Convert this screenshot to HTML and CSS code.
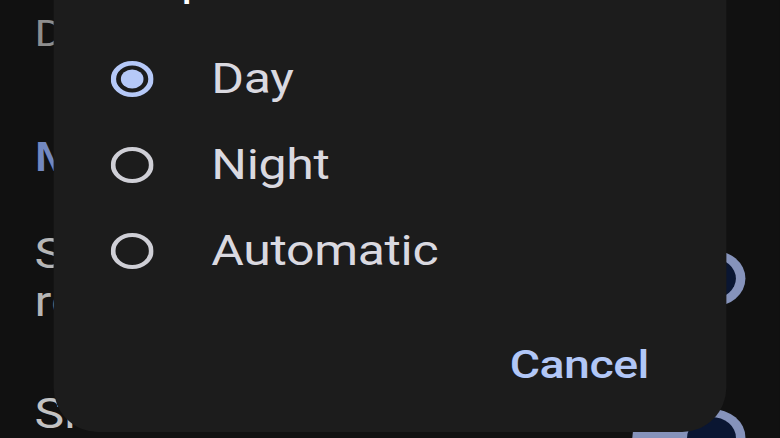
FILE: index.html
```html
<!DOCTYPE html>
<html lang="en">
<head>
<meta charset="utf-8">
<title>Map colour scheme</title>
<link rel="stylesheet" href="styles.css">
</head>
<body>
<div class="screen">
  <div class="settings">
    <div class="item-sub">Day</div>
    <div class="section-head">Map display</div>
    <div class="row row-c">
      <div class="row-text">
        <div class="row-title">Show speed limit<br>reminders</div>
      </div>
      <div class="switch"><span class="thumb"></span></div>
    </div>
    <div class="row row-d">
      <div class="row-text">
        <div class="row-title">Show traffic alerts</div>
        <div class="row-subtitle">On your route</div>
      </div>
      <div class="switch"><span class="thumb"></span></div>
    </div>
  </div>

  <div class="dialog" role="dialog">
    <div class="dialog-title">Map color scheme</div>
    <div class="options">
      <div class="option">
        <svg class="radio" viewBox="0 0 36 36" width="36" height="36">
          <circle cx="18" cy="18" r="15.75" fill="none" stroke="#b6c9f8" stroke-width="4.5"/>
          <circle cx="18" cy="18" r="9.5" fill="#b6c9f8"/>
        </svg>
        <span class="option-label">Day</span>
      </div>
      <div class="option">
        <svg class="radio" viewBox="0 0 36 36" width="36" height="36">
          <circle cx="18" cy="18" r="16" fill="none" stroke="#cfcfd6" stroke-width="4"/>
        </svg>
        <span class="option-label">Night</span>
      </div>
      <div class="option">
        <svg class="radio" viewBox="0 0 36 36" width="36" height="36">
          <circle cx="18" cy="18" r="16" fill="none" stroke="#cfcfd6" stroke-width="4"/>
        </svg>
        <span class="option-label">Automatic</span>
      </div>
    </div>
    <div class="actions">
      <span class="btn-text">Cancel</span>
    </div>
  </div>
</div>
</body>
</html>
```

FILE: styles.css
```css
html, body {
  margin: 0;
  padding: 0;
  background: #111111;
  overflow: hidden;
}

body {
  font-family: Roboto, "Liberation Sans", sans-serif;
}

.screen {
  position: relative;
  width: 655px;
  height: 438px;
  overflow: hidden;
  background: #111111;
  transform: scaleX(1.1908);
  transform-origin: 0 0;
}

/* background settings list */
.settings {
  display: flex;
  flex-direction: column;
  padding: 14px 29px 0 29px;
}

.item-sub {
  font-size: 37px;
  line-height: 40px;
  color: #8e8e8e;
}

.section-head {
  margin-top: 78px;
  font-size: 41px;
  line-height: 50px;
  color: #7388c0;
  font-weight: 500;
}

.row {
  display: flex;
  align-items: center;
  justify-content: space-between;
}

.row-c {
  margin-top: 48px;
}

.row-d {
  margin-top: 64px;
}

.row-title {
  font-size: 42px;
  line-height: 48px;
  color: #b6b6b6;
}

.row-d .row-title {
  color: #c2c2c2;
}

.row-subtitle {
  font-size: 36px;
  line-height: 46px;
  color: #8e8e8e;
}

.switch {
  display: flex;
  align-items: center;
  justify-content: flex-end;
  box-sizing: border-box;
  width: 95px;
  height: 57px;
  padding-right: 8px;
  border-radius: 28.5px;
  background: #8693bb;
  flex: none;
}

.thumb {
  display: block;
  width: 41px;
  height: 41px;
  border-radius: 50%;
  background: #0a1632;
}

/* dialog */
.dialog {
  position: absolute;
  left: 44.5px;
  top: -47px;
  width: 565.5px;
  height: 479px;
  box-sizing: border-box;
  padding-left: 48px;
  padding-right: 65px;
  background: #1c1c1c;
  border-radius: 37px / 45px;
  display: flex;
  flex-direction: column;
}

.dialog-title {
  font-size: 42px;
  line-height: 56px;
  color: #ffffff;
  white-space: nowrap;
}

.options {
  margin-top: 27px;
  display: flex;
  flex-direction: column;
}

.option {
  display: flex;
  align-items: center;
  gap: 49px;
  height: 86px;
}

.radio {
  display: block;
  flex: none;
}

.option-label {
  font-size: 42px;
  line-height: 86px;
  letter-spacing: -0.3px;
  color: #dad9e0;
}

.actions {
  margin-top: 46px;
  display: flex;
  justify-content: flex-end;
}

.btn-text {
  font-size: 39px;
  line-height: 50px;
  font-weight: 500;
  letter-spacing: -0.4px;
  color: #b2c7f7;
}
```
